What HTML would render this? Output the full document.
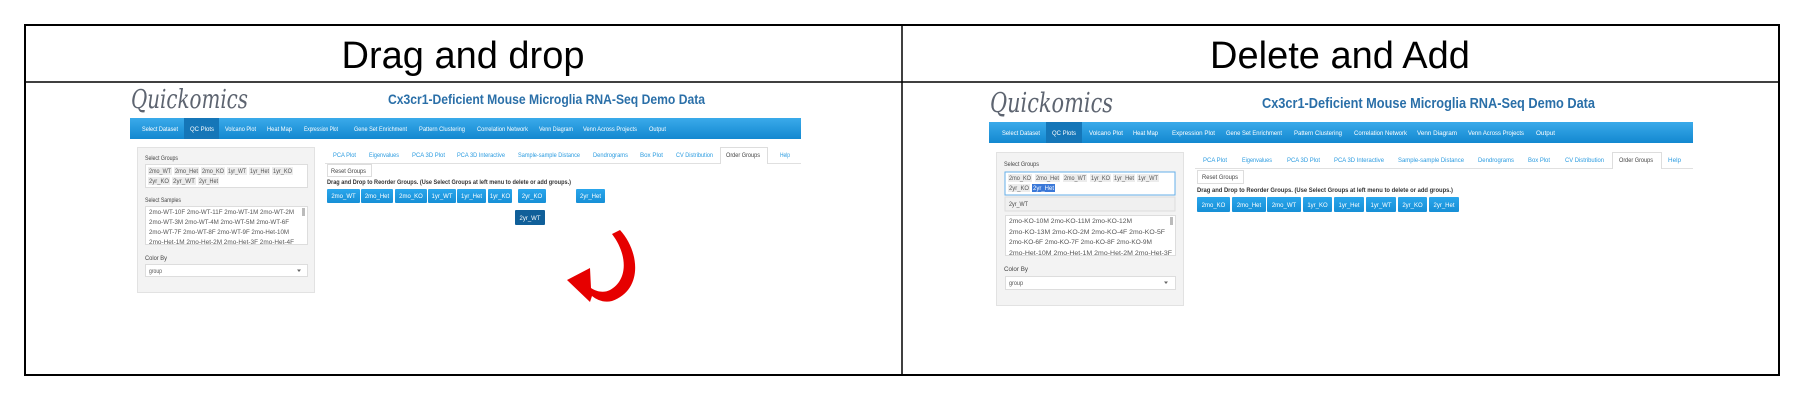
<!DOCTYPE html>
<html><head><meta charset="utf-8"><style>
html,body{margin:0;padding:0;background:#fff;width:1816px;height:411px;overflow:hidden}
svg{display:block}
text{font-family:"Liberation Sans",sans-serif}
.n{fill:#fff;font-size:6px}
.t{fill:#2a9be0;font-size:6px}
.s{fill:#444;font-size:6px}
.c{fill:#555;font-size:6px}
.b{fill:#fff;font-size:6px}
</style></head><body>
<svg width="1816" height="411" viewBox="0 0 1816 411">
<defs>
<linearGradient id="nav" x1="0" y1="0" x2="0" y2="1"><stop offset="0" stop-color="#3aaaea"/><stop offset="1" stop-color="#1388d0"/></linearGradient>
<linearGradient id="btn" x1="0" y1="0" x2="0" y2="1"><stop offset="0" stop-color="#2aa6ec"/><stop offset="1" stop-color="#168fd6"/></linearGradient>
</defs>
<!-- table -->
<rect x="25" y="25" width="1754" height="350" fill="none" stroke="#000" stroke-width="2"/>
<line x1="25" y1="82" x2="1779" y2="82" stroke="#000" stroke-width="1.5"/>
<line x1="902" y1="25" x2="902" y2="376" stroke="#000" stroke-width="1.5"/>
<text x="463" y="68" text-anchor="middle" font-size="38" fill="#000">Drag and drop</text>
<text x="1340" y="68" text-anchor="middle" font-size="38" fill="#000">Delete and Add</text>

<!-- LEFT SCREENSHOT -->
<text x="131" y="108" font-family="DejaVu Serif" font-style="italic" font-size="26" fill="#5d6470" textLength="117" lengthAdjust="spacingAndGlyphs" style="font-family:'DejaVu Serif',serif">Quickomics</text>
<text x="388" y="104" font-size="14" font-weight="bold" fill="#2a6fa8" textLength="317" lengthAdjust="spacingAndGlyphs">Cx3cr1-Deficient Mouse Microglia RNA-Seq Demo Data</text>
<rect x="130" y="118" width="671" height="21" fill="url(#nav)"/>
<rect x="184" y="118" width="35" height="21" fill="#1576b8"/>
<g class="n">
<text x="142" y="131" textLength="36" lengthAdjust="spacingAndGlyphs">Select Dataset</text>
<text x="190" y="131" textLength="24" lengthAdjust="spacingAndGlyphs">QC Plots</text>
<text x="225" y="131" textLength="31" lengthAdjust="spacingAndGlyphs">Volcano Plot</text>
<text x="267" y="131" textLength="25" lengthAdjust="spacingAndGlyphs">Heat Map</text>
<text x="304" y="131" textLength="34" lengthAdjust="spacingAndGlyphs">Expression Plot</text>
<text x="354" y="131" textLength="53" lengthAdjust="spacingAndGlyphs">Gene Set Enrichment</text>
<text x="419" y="131" textLength="46" lengthAdjust="spacingAndGlyphs">Pattern Clustering</text>
<text x="477" y="131" textLength="51" lengthAdjust="spacingAndGlyphs">Correlation Network</text>
<text x="539" y="131" textLength="34" lengthAdjust="spacingAndGlyphs">Venn Diagram</text>
<text x="583" y="131" textLength="54" lengthAdjust="spacingAndGlyphs">Venn Across Projects</text>
<text x="649" y="131" textLength="17" lengthAdjust="spacingAndGlyphs">Output</text>
</g>
<!-- sidebar -->
<rect x="137.5" y="147.5" width="177" height="145" fill="#f3f3f3" stroke="#e2e2e2"/>
<text class="s" x="145" y="160" textLength="33" lengthAdjust="spacingAndGlyphs">Select Groups</text>
<rect x="145.5" y="164.5" width="162" height="23" fill="#fff" stroke="#ddd"/>
<g fill="#ececec">
<rect x="148" y="167" width="24" height="8"/><rect x="174" y="167" width="25" height="8"/><rect x="201" y="167" width="24" height="8"/><rect x="227" y="167" width="20" height="8"/><rect x="249" y="167" width="21" height="8"/><rect x="272" y="167" width="21" height="8"/>
<rect x="148" y="177" width="22" height="8"/><rect x="172" y="177" width="24" height="8"/><rect x="198" y="177" width="21" height="8"/>
</g>
<g class="c">
<text x="149" y="173" textLength="22" lengthAdjust="spacingAndGlyphs">2mo_WT</text>
<text x="175" y="173" textLength="23" lengthAdjust="spacingAndGlyphs">2mo_Het</text>
<text x="202" y="173" textLength="22" lengthAdjust="spacingAndGlyphs">2mo_KO</text>
<text x="228" y="173" textLength="18" lengthAdjust="spacingAndGlyphs">1yr_WT</text>
<text x="250" y="173" textLength="19" lengthAdjust="spacingAndGlyphs">1yr_Het</text>
<text x="273" y="173" textLength="19" lengthAdjust="spacingAndGlyphs">1yr_KO</text>
<text x="149" y="183" textLength="20" lengthAdjust="spacingAndGlyphs">2yr_KO</text>
<text x="173" y="183" textLength="22" lengthAdjust="spacingAndGlyphs">2yr_WT</text>
<text x="199" y="183" textLength="19" lengthAdjust="spacingAndGlyphs">2yr_Het</text>
</g>
<text class="s" x="145" y="202" textLength="36" lengthAdjust="spacingAndGlyphs">Select Samples</text>
<rect x="145.5" y="206.5" width="162" height="38" fill="#fff" stroke="#ddd"/>
<rect x="302" y="208" width="3" height="8" fill="#bbb"/>
<g class="c">
<text x="149" y="214" textLength="145" lengthAdjust="spacingAndGlyphs">2mo-WT-10F 2mo-WT-11F 2mo-WT-1M 2mo-WT-2M</text>
<text x="149" y="224" textLength="140" lengthAdjust="spacingAndGlyphs">2mo-WT-3M 2mo-WT-4M 2mo-WT-5M 2mo-WT-6F</text>
<text x="149" y="234" textLength="140" lengthAdjust="spacingAndGlyphs">2mo-WT-7F 2mo-WT-8F 2mo-WT-9F 2mo-Het-10M</text>
<text x="149" y="244" textLength="145" lengthAdjust="spacingAndGlyphs">2mo-Het-1M 2mo-Het-2M 2mo-Het-3F 2mo-Het-4F</text>
</g>
<text class="s" x="145" y="260" textLength="22" lengthAdjust="spacingAndGlyphs">Color By</text>
<rect x="145.5" y="264.5" width="162" height="12" fill="#fff" stroke="#ddd"/>
<text class="c" x="149" y="273" textLength="13" lengthAdjust="spacingAndGlyphs">group</text>
<path d="M297 269.5 L301 269.5 L299 272 Z" fill="#666"/>
<!-- tabs -->
<line x1="325" y1="163.5" x2="801" y2="163.5" stroke="#e0e0e0"/>
<path d="M720.5 164 V147.5 H767.5 V164" fill="#fff" stroke="#ddd"/>
<rect x="721" y="163" width="46" height="2" fill="#fff"/>
<g class="t">
<text x="333" y="157" textLength="23" lengthAdjust="spacingAndGlyphs">PCA Plot</text>
<text x="369" y="157" textLength="30" lengthAdjust="spacingAndGlyphs">Eigenvalues</text>
<text x="412" y="157" textLength="33" lengthAdjust="spacingAndGlyphs">PCA 3D Plot</text>
<text x="457" y="157" textLength="48" lengthAdjust="spacingAndGlyphs">PCA 3D Interactive</text>
<text x="518" y="157" textLength="62" lengthAdjust="spacingAndGlyphs">Sample-sample Distance</text>
<text x="593" y="157" textLength="35" lengthAdjust="spacingAndGlyphs">Dendrograms</text>
<text x="640" y="157" textLength="23" lengthAdjust="spacingAndGlyphs">Box Plot</text>
<text x="676" y="157" textLength="37" lengthAdjust="spacingAndGlyphs">CV Distribution</text>
<text x="780" y="157" textLength="10" lengthAdjust="spacingAndGlyphs">Help</text>
</g>
<text class="s" x="726" y="157" textLength="34" lengthAdjust="spacingAndGlyphs">Order Groups</text>
<rect x="327.5" y="164.5" width="44" height="12" fill="#fff" stroke="#ddd"/>
<text class="s" x="331" y="173" textLength="35" lengthAdjust="spacingAndGlyphs">Reset Groups</text>
<text x="327" y="184" font-size="6" font-weight="bold" fill="#333" textLength="244" lengthAdjust="spacingAndGlyphs">Drag and Drop to Reorder Groups. (Use Select Groups at left menu to delete or add groups.)</text>
<g fill="url(#btn)">
<rect x="327" y="189" width="33" height="14" rx="1"/><rect x="361" y="189" width="32" height="14" rx="1"/><rect x="395" y="189" width="32" height="14" rx="1"/><rect x="428" y="189" width="28" height="14" rx="1"/><rect x="457" y="189" width="29" height="14" rx="1"/><rect x="488" y="189" width="24" height="14" rx="1"/><rect x="518" y="189" width="28" height="14" rx="1"/><rect x="576" y="189" width="29" height="14" rx="1"/>
</g>
<rect x="515" y="210" width="30" height="15" rx="1" fill="#105f99"/>
<g class="b" text-anchor="middle">
<text x="343.5" y="198">2mo_WT</text><text x="377" y="198">2mo_Het</text><text x="411" y="198">2mo_KO</text><text x="442" y="198">1yr_WT</text><text x="471.5" y="198">1yr_Het</text><text x="500" y="198">1yr_KO</text><text x="532" y="198">2yr_KO</text><text x="590.5" y="198">2yr_Het</text><text x="530" y="220">2yr_WT</text>
</g>
<!-- red arrow -->
<path d="M612 234 L620 230 C640 252 643 290 612 301 C604 303 597 300 592 296 L590 302 L567 280 L590 268 L591 288 C597 292 604 293 610 290 C628 280 628 255 612 234 Z" fill="#e60000"/>

<!-- RIGHT SCREENSHOT -->
<text x="990" y="112" font-style="italic" font-size="27" fill="#5d6470" textLength="123" lengthAdjust="spacingAndGlyphs" style="font-family:'DejaVu Serif',serif">Quickomics</text>
<text x="1262" y="108" font-size="15" font-weight="bold" fill="#2a6fa8" textLength="333" lengthAdjust="spacingAndGlyphs">Cx3cr1-Deficient Mouse Microglia RNA-Seq Demo Data</text>
<rect x="989" y="122" width="704" height="21" fill="url(#nav)"/>
<rect x="1046" y="122" width="36" height="21" fill="#1576b8"/>
<g class="n">
<text x="1002" y="135" textLength="38" lengthAdjust="spacingAndGlyphs">Select Dataset</text>
<text x="1052" y="135" textLength="24" lengthAdjust="spacingAndGlyphs">QC Plots</text>
<text x="1089" y="135" textLength="34" lengthAdjust="spacingAndGlyphs">Volcano Plot</text>
<text x="1133" y="135" textLength="25" lengthAdjust="spacingAndGlyphs">Heat Map</text>
<text x="1172" y="135" textLength="43" lengthAdjust="spacingAndGlyphs">Expression Plot</text>
<text x="1226" y="135" textLength="56" lengthAdjust="spacingAndGlyphs">Gene Set Enrichment</text>
<text x="1294" y="135" textLength="48" lengthAdjust="spacingAndGlyphs">Pattern Clustering</text>
<text x="1354" y="135" textLength="53" lengthAdjust="spacingAndGlyphs">Correlation Network</text>
<text x="1417" y="135" textLength="40" lengthAdjust="spacingAndGlyphs">Venn Diagram</text>
<text x="1468" y="135" textLength="56" lengthAdjust="spacingAndGlyphs">Venn Across Projects</text>
<text x="1536" y="135" textLength="19" lengthAdjust="spacingAndGlyphs">Output</text>
</g>
<rect x="996.5" y="152.5" width="187" height="153" fill="#f3f3f3" stroke="#e2e2e2"/>
<text class="s" x="1004" y="166" textLength="35" lengthAdjust="spacingAndGlyphs">Select Groups</text>
<rect x="1005" y="172" width="170" height="23" fill="#fff" stroke="#66afe9" stroke-width="1"/>
<g fill="#ececec">
<rect x="1008" y="174" width="24" height="8"/><rect x="1035" y="174" width="25" height="8"/><rect x="1063" y="174" width="24" height="8"/><rect x="1090" y="174" width="21" height="8"/><rect x="1113" y="174" width="22" height="8"/><rect x="1137" y="174" width="22" height="8"/>
<rect x="1008" y="184" width="22" height="8"/>
</g>
<rect x="1032" y="184" width="23" height="8" fill="#3a78d8"/>
<g class="c">
<text x="1009" y="180" textLength="22" lengthAdjust="spacingAndGlyphs">2mo_KO</text>
<text x="1036" y="180" textLength="23" lengthAdjust="spacingAndGlyphs">2mo_Het</text>
<text x="1064" y="180" textLength="22" lengthAdjust="spacingAndGlyphs">2mo_WT</text>
<text x="1091" y="180" textLength="19" lengthAdjust="spacingAndGlyphs">1yr_KO</text>
<text x="1114" y="180" textLength="20" lengthAdjust="spacingAndGlyphs">1yr_Het</text>
<text x="1138" y="180" textLength="20" lengthAdjust="spacingAndGlyphs">1yr_WT</text>
<text x="1009" y="190" textLength="20" lengthAdjust="spacingAndGlyphs">2yr_KO</text>
</g>
<text x="1033" y="190" font-size="6" fill="#fff" textLength="21" lengthAdjust="spacingAndGlyphs">2yr_Het</text>
<rect x="1005" y="197" width="170" height="14" fill="#f0f0f0" stroke="#ddd"/>
<text class="s" x="1009" y="206" textLength="19" lengthAdjust="spacingAndGlyphs">2yr_WT</text>
<rect x="1005.5" y="215.5" width="170" height="40" fill="#fff" stroke="#ddd"/>
<rect x="1170" y="217" width="3" height="8" fill="#bbb"/>
<g class="c">
<text x="1009" y="223" textLength="123" lengthAdjust="spacingAndGlyphs">2mo-KO-10M 2mo-KO-11M 2mo-KO-12M</text>
<text x="1009" y="234" textLength="156" lengthAdjust="spacingAndGlyphs">2mo-KO-13M 2mo-KO-2M 2mo-KO-4F 2mo-KO-5F</text>
<text x="1009" y="244" textLength="143" lengthAdjust="spacingAndGlyphs">2mo-KO-6F 2mo-KO-7F 2mo-KO-8F 2mo-KO-9M</text>
<text x="1009" y="255" textLength="163" lengthAdjust="spacingAndGlyphs">2mo-Het-10M 2mo-Het-1M 2mo-Het-2M 2mo-Het-3F</text>
</g>
<text class="s" x="1004" y="271" textLength="24" lengthAdjust="spacingAndGlyphs">Color By</text>
<rect x="1005.5" y="276.5" width="170" height="13" fill="#fff" stroke="#ddd"/>
<text class="c" x="1009" y="285" textLength="14" lengthAdjust="spacingAndGlyphs">group</text>
<path d="M1164 281.5 L1168 281.5 L1166 284 Z" fill="#666"/>
<line x1="1195" y1="168.5" x2="1693" y2="168.5" stroke="#e0e0e0"/>
<path d="M1612.5 169 V152.5 H1661.5 V169" fill="#fff" stroke="#ddd"/>
<rect x="1613" y="168" width="48" height="2" fill="#fff"/>
<g class="t">
<text x="1203" y="162" textLength="24" lengthAdjust="spacingAndGlyphs">PCA Plot</text>
<text x="1242" y="162" textLength="30" lengthAdjust="spacingAndGlyphs">Eigenvalues</text>
<text x="1287" y="162" textLength="33" lengthAdjust="spacingAndGlyphs">PCA 3D Plot</text>
<text x="1334" y="162" textLength="50" lengthAdjust="spacingAndGlyphs">PCA 3D Interactive</text>
<text x="1398" y="162" textLength="66" lengthAdjust="spacingAndGlyphs">Sample-sample Distance</text>
<text x="1478" y="162" textLength="36" lengthAdjust="spacingAndGlyphs">Dendrograms</text>
<text x="1528" y="162" textLength="22" lengthAdjust="spacingAndGlyphs">Box Plot</text>
<text x="1565" y="162" textLength="39" lengthAdjust="spacingAndGlyphs">CV Distribution</text>
<text x="1668" y="162" textLength="13" lengthAdjust="spacingAndGlyphs">Help</text>
</g>
<text class="s" x="1619" y="162" textLength="34" lengthAdjust="spacingAndGlyphs">Order Groups</text>
<rect x="1197.5" y="170.5" width="46" height="13" fill="#fff" stroke="#ddd"/>
<text class="s" x="1202" y="179" textLength="36" lengthAdjust="spacingAndGlyphs">Reset Groups</text>
<text x="1197" y="192" font-size="6" font-weight="bold" fill="#333" textLength="256" lengthAdjust="spacingAndGlyphs">Drag and Drop to Reorder Groups. (Use Select Groups at left menu to delete or add groups.)</text>
<g fill="url(#btn)">
<rect x="1197" y="197" width="33" height="15" rx="1"/><rect x="1232" y="197" width="34" height="15" rx="1"/><rect x="1267" y="197" width="34" height="15" rx="1"/><rect x="1303" y="197" width="29" height="15" rx="1"/><rect x="1334" y="197" width="30" height="15" rx="1"/><rect x="1366" y="197" width="30" height="15" rx="1"/><rect x="1398" y="197" width="29" height="15" rx="1"/><rect x="1429" y="197" width="30" height="15" rx="1"/>
</g>
<g class="b" text-anchor="middle">
<text x="1213.5" y="207">2mo_KO</text><text x="1249" y="207">2mo_Het</text><text x="1284" y="207">2mo_WT</text><text x="1317.5" y="207">1yr_KO</text><text x="1349" y="207">1yr_Het</text><text x="1381" y="207">1yr_WT</text><text x="1412.5" y="207">2yr_KO</text><text x="1444" y="207">2yr_Het</text>
</g>
</svg>
</body></html>
